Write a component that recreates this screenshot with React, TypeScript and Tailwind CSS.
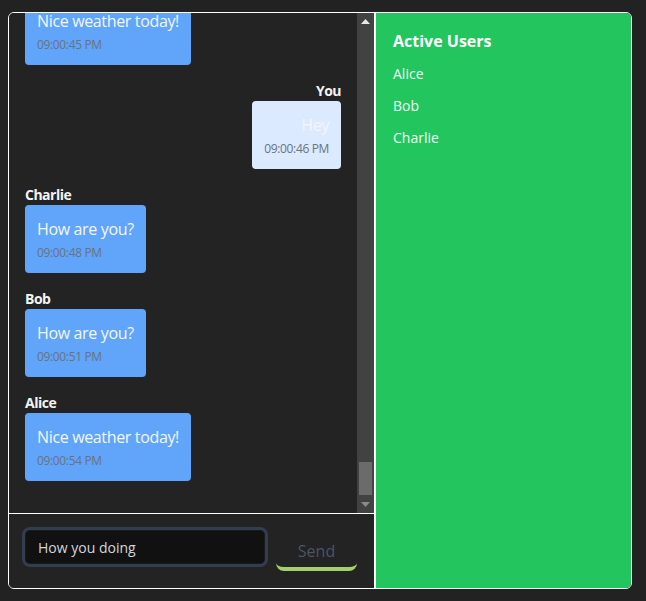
import React, { useLayoutEffect, useRef } from 'react';

type Message = { id: number; sender: string; text: string; time: string };

const senders = ['Alice', 'Bob', 'Charlie', 'You'];
const texts = ['Hello everyone!', 'How are you?', 'Nice weather today!', 'Hey', 'What are you up to?'];

function formatTime(total: number) {
  const h = Math.floor(total / 3600) % 24;
  const m = Math.floor(total / 60) % 60;
  const s = total % 60;
  const h12 = h % 12 === 0 ? 12 : h % 12;
  const pad = (n: number) => String(n).padStart(2, '0');
  return `${pad(h12)}:${pad(m)}:${pad(s)} ${h >= 12 ? 'PM' : 'AM'}`;
}

function buildMessages(): Message[] {
  const base = 21 * 3600 + 45;
  const earlier: Message[] = [];
  for (let i = 0; i < 62; i++) {
    earlier.push({
      id: i,
      sender: senders[(i * 7 + 1) % 4],
      text: texts[(i * 3 + 2) % texts.length],
      time: formatTime(base - (62 - i) * 3),
    });
  }
  const last: Message[] = [
    { id: 62, sender: 'Bob', text: 'Nice weather today!', time: formatTime(base) },
    { id: 63, sender: 'You', text: 'Hey', time: formatTime(base + 1) },
    { id: 64, sender: 'Charlie', text: 'How are you?', time: formatTime(base + 3) },
    { id: 65, sender: 'Bob', text: 'How are you?', time: formatTime(base + 6) },
    { id: 66, sender: 'Alice', text: 'Nice weather today!', time: formatTime(base + 9) },
  ];
  return [...earlier, ...last];
}

const messages = buildMessages();

function ChatMessage({ msg }: { msg: Message }) {
  const mine = msg.sender === 'You';
  return (
    <div className={`mb-4 flex flex-col ${mine ? 'items-end' : 'items-start'}`}>
      <div className="text-sm leading-5 font-bold tracking-[-0.5px] text-[#f3f3f3]">{msg.sender}</div>
      <div className={`rounded px-3 py-3 ${mine ? 'bg-[#dbeafe] text-right' : 'bg-[#60a5fa]'}`}>
        <div className="text-base leading-6 tracking-[-0.35px] text-[#f5f5ff]">{msg.text}</div>
        <div className="mt-1 text-xs leading-4 tracking-[-0.35px] text-[#6b7280]">{msg.time}</div>
      </div>
    </div>
  );
}

// dark scrollbar, drawn since the page hides native ones
function ScrollBar() {
  return (
    <div className="flex w-[17px] flex-col bg-[#424242]">
      <div className="flex h-[17px] items-center justify-center">
        <svg width="9" height="5" viewBox="0 0 9 5">
          <polygon points="0,5 9,5 4.5,0" fill="#e8e8e8" />
        </svg>
      </div>
      <div className="flex flex-1 flex-col justify-end px-[2px] pb-[1px]">
        <div className="h-[33px] bg-[#6b6b6b]" />
      </div>
      <div className="flex h-[17px] items-center justify-center">
        <svg width="9" height="5" viewBox="0 0 9 5">
          <polygon points="0,0 9,0 4.5,5" fill="#8a8a8a" />
        </svg>
      </div>
    </div>
  );
}

export default function App() {
  const listRef = useRef<HTMLDivElement>(null);

  useLayoutEffect(() => {
    if (listRef.current) {
      listRef.current.scrollTop = listRef.current.scrollHeight;
    }
  }, []);

  return (
    <div className="min-h-screen bg-[#222222] pl-2 pt-3 font-['Open_Sans',sans-serif]">
      <div className="flex h-[577px] w-[624px] overflow-hidden rounded-md border border-white">
        <div className="flex w-[366px] shrink-0 flex-col border-r border-white bg-[#232323]">
          <div className="flex h-[500px]">
            <div
              ref={listRef}
              className="flex-1 overflow-y-scroll p-4 [scrollbar-width:none] [&::-webkit-scrollbar]:hidden"
            >
              {messages.map((m) => (
                <ChatMessage key={m.id} msg={m} />
              ))}
            </div>
            <ScrollBar />
          </div>
          <div className="flex flex-1 items-start gap-2 border-t border-white pl-[13px] pr-[17px] pt-[13px]">
            <input
              defaultValue="How you doing"
              className="h-10 flex-1 rounded-lg border-[3px] border-[#323d52] bg-[#111111] px-[13px] text-sm text-[#d1d5db] shadow-[inset_0_0_0_1px_#1a1a1a] outline-none"
            />
            <button className="mt-1 h-10 w-[81px] rounded-lg border-b-4 border-[#a3d06a] bg-transparent pt-1 text-base text-[#4b5563]">
              Send
            </button>
          </div>
        </div>
        <div className="flex-1 border-l border-white bg-[#22c55e] py-4 pl-[17px] pr-4">
          <h2 className="mb-[5px] text-base leading-6 font-bold text-white">Active Users</h2>
          <ul>
            {['Alice', 'Bob', 'Charlie'].map((u) => (
              <li key={u} className="py-1.5 text-sm leading-5 text-[#f0fdf4]">
                {u}
              </li>
            ))}
          </ul>
        </div>
      </div>
    </div>
  );
}
